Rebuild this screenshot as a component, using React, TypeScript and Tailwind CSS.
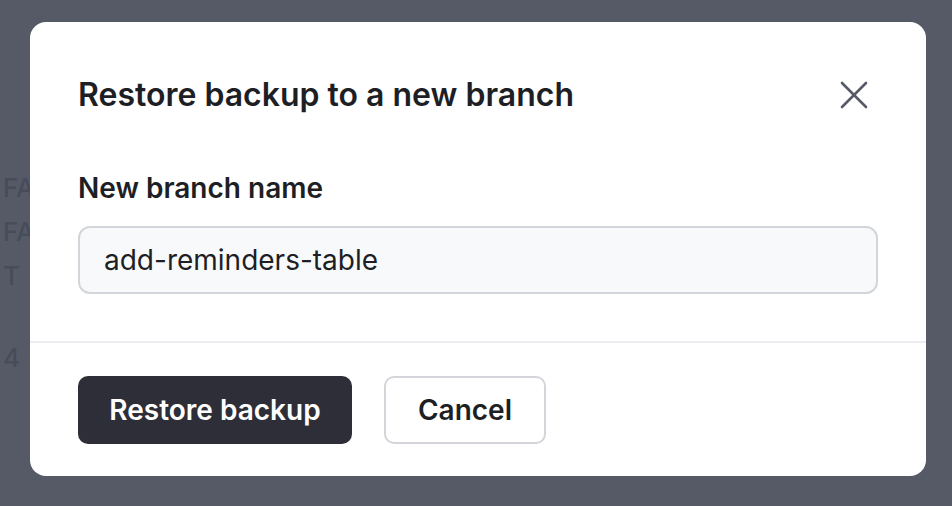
import { X } from "lucide-react";

const App = () => {
  return (
    <div className="relative w-[952px] h-[506px] overflow-hidden bg-white font-['Inter',sans-serif]">
      {/* page behind the overlay */}
      <div className="flex flex-col pl-[3px] pt-[166px] text-[26px] leading-[44px] font-medium text-[#6b7280]">
        <div>FA</div>
        <div>FA</div>
        <div>T</div>
        <div className="mt-[38px]">4</div>
      </div>

      <div className="absolute inset-0 bg-[#434855]/90 pl-[30px] pt-[22px]">
        <div className="w-[896px] h-[454px] bg-white rounded-[16px] flex flex-col">
          <div className="px-12 pt-[53px]">
            <div className="flex items-center justify-between">
              <h2 className="text-[32px] leading-[40px] font-semibold text-[#1e1f25]">
                Restore backup to a new branch
              </h2>
              <button className="-my-[4px] text-[#555a66]">
                <X size={48} strokeWidth={1.3} />
              </button>
            </div>
            <div className="mt-[55px] text-[28px] leading-[36px] font-semibold text-[#1e1f25]">
              New branch name
            </div>
            <div className="mt-[20px] h-[68px] rounded-[12px] border-2 border-[#d4d5da] bg-[#f8f9fb] flex items-center px-[24px] text-[28px] text-[#1e1f25]">
              add-reminders-table
            </div>
          </div>
          <div className="mt-[47px] h-[2px] bg-[#ececf0]" />
          <div className="flex gap-8 px-12 pt-[33px]">
            <button className="h-[68px] w-[274px] rounded-[10px] bg-[#2e2e39] text-white text-[28px] font-semibold">
              Restore backup
            </button>
            <button className="h-[68px] w-[162px] rounded-[10px] border-2 border-[#d4d5da] bg-white text-[#1e1f25] text-[28px] font-semibold">
              Cancel
            </button>
          </div>
        </div>
      </div>
    </div>
  );
};

export default App;
